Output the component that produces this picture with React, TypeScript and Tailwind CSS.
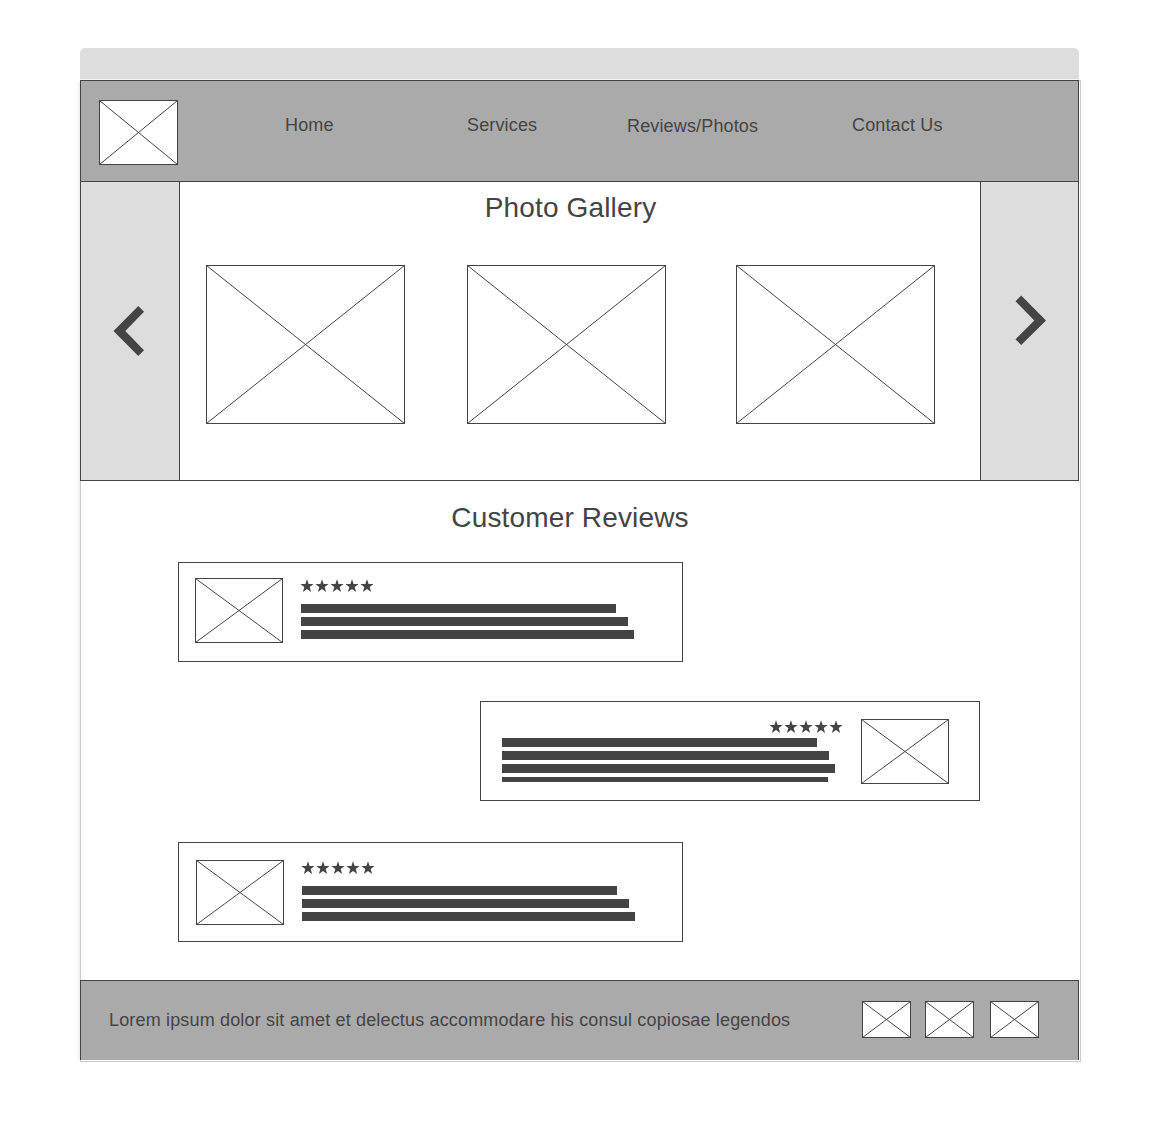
import React from "react";

const INK = "#444444";

function Placeholder({ w, h, className = "" }: { w: number; h: number; className?: string }) {
  return (
    <svg width={w} height={h} viewBox={`0 0 ${w} ${h}`} className={`block shrink-0 ${className}`}>
      <rect x="0.5" y="0.5" width={w - 1} height={h - 1} fill="#fff" stroke={INK} />
      <path d={`M0.5 0.5L${w - 0.5} ${h - 0.5}M${w - 0.5} 0.5L0.5 ${h - 0.5}`} stroke={INK} strokeWidth="1" />
    </svg>
  );
}

function Stars({ className = "" }: { className?: string }) {
  return (
    <div className={`flex gap-[2px] ${className}`}>
      {[0, 1, 2, 3, 4].map((i) => (
        <svg key={i} width="13" height="13" viewBox="0 0 13 13" className="block overflow-visible">
          <path
            d="M6 0.2L7.6 4.9L12.6 5L8.7 8.1L10.1 12.9L6 10.1L1.9 12.9L3.3 8.1L-0.6 5L4.4 4.9Z"
            fill={INK}
          />
        </svg>
      ))}
    </div>
  );
}

function Bars({ widths, className = "" }: { widths: number[]; className?: string }) {
  return (
    <div className={`flex flex-col gap-1 ${className}`}>
      {widths.map((w, i) => (
        <div key={i} className={i === 3 ? "h-[5px] bg-[#444444]" : "h-[9px] bg-[#444444]"} style={{ width: w }} />
      ))}
    </div>
  );
}

export default function App() {
  return (
    <div className="flex h-[1140px] w-[1159px] flex-col bg-white pl-20 pt-12 font-['Liberation_Sans',Arial,sans-serif] text-[#444444] antialiased">
      <div className="relative z-10 h-[31px] w-[999px] shrink-0 rounded-t-[5px] bg-[#dddddd]" />
      <div className="relative z-10 h-px w-[999px] shrink-0 bg-[#f4f4f4]" />
      <div className="h-[982px] w-[1001px] shrink-0 border border-[#cccccc] shadow-[-3px_0_4px_-2px_rgba(0,0,0,0.1)]">
        <div className="-ml-px -mt-px flex h-[980px] w-[999px] flex-col">
          <header className="flex h-[102px] shrink-0 border border-[#444444] bg-[#aaaaaa] pl-[18px] pt-[19px]">
            <Placeholder w={79} h={65} />
            <nav className="ml-[107px] flex pt-[15px] text-[18px] leading-5 tracking-[0.15px]">
              <a className="w-[182px]">Home</a>
              <a className="w-[160px]">Services</a>
              <a className="w-[225px] pt-px">Reviews/Photos</a>
              <a>Contact Us</a>
            </nav>
          </header>

          <section className="flex h-[299px] shrink-0 border-x border-b border-[#444444]">
            <div className="w-[99px] border-r border-[#444444] bg-[#dddddd] pl-8 pt-[124px]">
              <svg width="32" height="50" viewBox="0 0 32 50" className="block">
                <path d="M25.3 0L31 5.7L12.3 25L31 44.3L25.3 50L0.5 25Z" fill={INK} />
              </svg>
            </div>
            <div className="w-[800px]">
              <h2 className="mt-[10px] w-[781px] text-center text-[28px] leading-8 tracking-[0.15px]">Photo Gallery</h2>
              <div className="mt-[41px] flex pl-[26px]">
                <Placeholder w={199} h={159} />
                <Placeholder w={199} h={159} className="ml-[62px]" />
                <Placeholder w={199} h={159} className="ml-[70px]" />
              </div>
            </div>
            <div className="w-[98px] border-l border-[#444444] bg-[#dddddd] pl-[34px] pt-[113px]">
              <svg width="32" height="50" viewBox="0 0 32 50" className="block">
                <path d="M6.2 0.5L31 25.5L6.2 50L0.5 44.3L19.3 25.5L0.5 6.2Z" fill={INK} />
              </svg>
            </div>
          </section>

          <section className="h-[499px] shrink-0">
            <h2 className="mt-[21px] w-[980px] text-center text-[28px] leading-8 tracking-[0.15px]">Customer Reviews</h2>
            <div className="ml-[98px] mt-[28px] flex h-[100px] w-[505px] border border-[#444444] pl-4 pt-[15px]">
              <Placeholder w={88} h={65} />
              <div className="ml-[18px]">
                <Stars className="mt-px" />
                <Bars className="mt-3" widths={[315, 327, 333]} />
              </div>
            </div>
            <div className="ml-[400px] mt-[39px] flex h-[100px] w-[500px] border border-[#444444] pl-[21px] pt-[17px]">
              <div className="w-[359px]">
                <Stars className="ml-[268px] mt-px" />
                <Bars className="mt-[5px]" widths={[315, 327, 333, 326]} />
              </div>
              <Placeholder w={88} h={65} />
            </div>
            <div className="ml-[98px] mt-[41px] flex h-[100px] w-[505px] border border-[#444444] pl-[17px] pt-[17px]">
              <Placeholder w={88} h={65} />
              <div className="ml-[18px]">
                <Stars className="mt-px" />
                <Bars className="mt-3" widths={[315, 327, 333]} />
              </div>
            </div>
          </section>

          <footer className="flex h-20 shrink-0 border-x border-t border-[#444444] bg-[#aaaaaa] pl-7 pt-5">
            <p className="w-[753px] whitespace-nowrap pt-[9px] text-[18px] leading-5 tracking-[0.163px]">
              Lorem ipsum dolor sit amet et delectus accommodare his consul copiosae legendos
            </p>
            <Placeholder w={49} h={37} />
            <Placeholder w={49} h={37} className="ml-[14px]" />
            <Placeholder w={49} h={37} className="ml-4" />
          </footer>
        </div>
      </div>
    </div>
  );
}
